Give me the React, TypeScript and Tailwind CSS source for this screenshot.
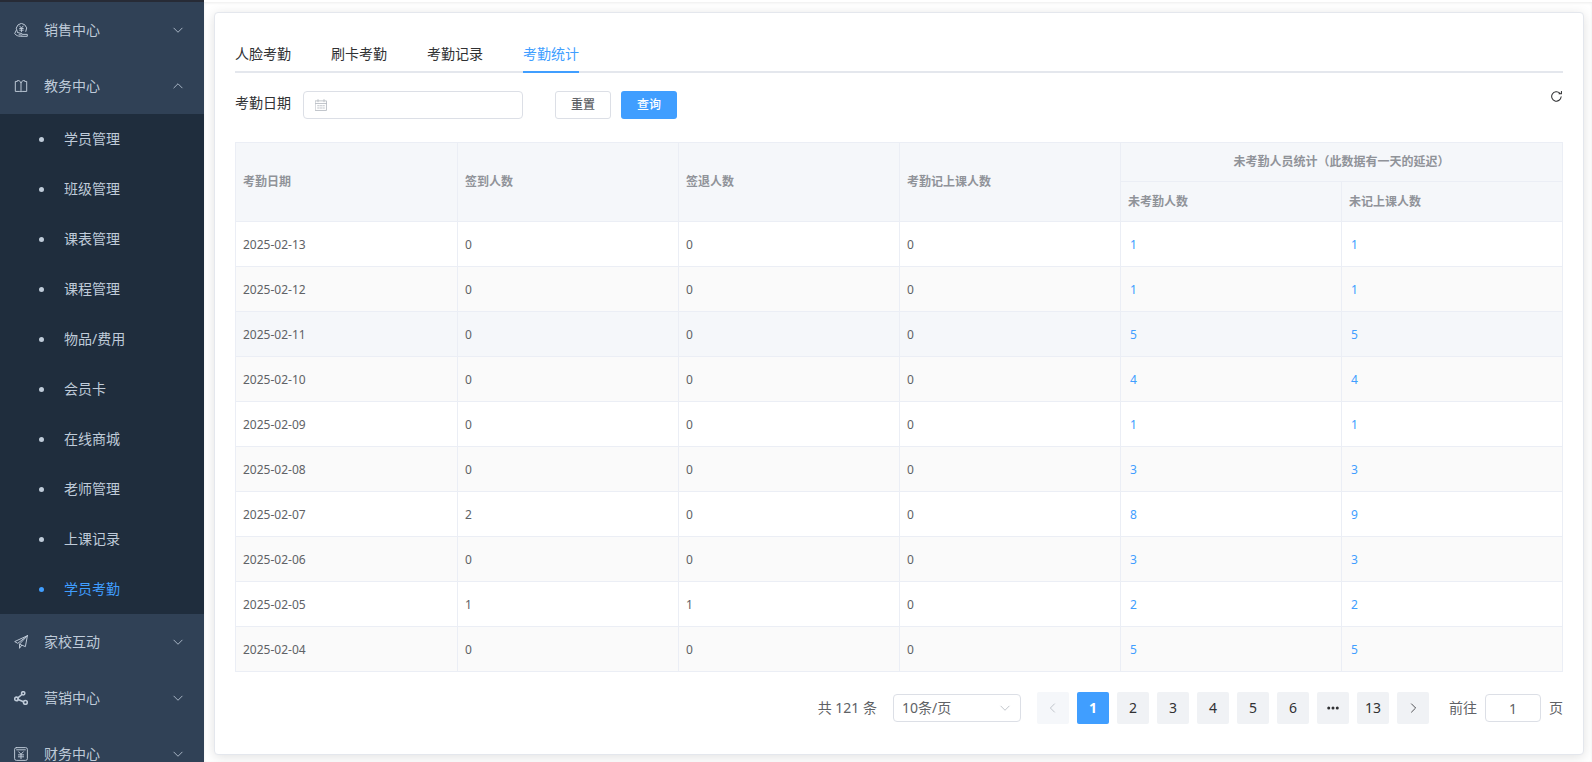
import type { ReactNode } from "react";

type Row = {
  date: string;
  signIn: number;
  signOut: number;
  recorded: number;
  absent: number;
  unrecorded: number;
};

const rows: Row[] = [
  { date: "2025-02-13", signIn: 0, signOut: 0, recorded: 0, absent: 1, unrecorded: 1 },
  { date: "2025-02-12", signIn: 0, signOut: 0, recorded: 0, absent: 1, unrecorded: 1 },
  { date: "2025-02-11", signIn: 0, signOut: 0, recorded: 0, absent: 5, unrecorded: 5 },
  { date: "2025-02-10", signIn: 0, signOut: 0, recorded: 0, absent: 4, unrecorded: 4 },
  { date: "2025-02-09", signIn: 0, signOut: 0, recorded: 0, absent: 1, unrecorded: 1 },
  { date: "2025-02-08", signIn: 0, signOut: 0, recorded: 0, absent: 3, unrecorded: 3 },
  { date: "2025-02-07", signIn: 2, signOut: 0, recorded: 0, absent: 8, unrecorded: 9 },
  { date: "2025-02-06", signIn: 0, signOut: 0, recorded: 0, absent: 3, unrecorded: 3 },
  { date: "2025-02-05", signIn: 1, signOut: 1, recorded: 0, absent: 2, unrecorded: 2 },
  { date: "2025-02-04", signIn: 0, signOut: 0, recorded: 0, absent: 5, unrecorded: 5 },
];

const subMenu: string[] = [
  "学员管理",
  "班级管理",
  "课表管理",
  "课程管理",
  "物品/费用",
  "会员卡",
  "在线商城",
  "老师管理",
  "上课记录",
  "学员考勤",
];

const tabs: string[] = ["人脸考勤", "刷卡考勤", "考勤记录", "考勤统计"];

function Icon({ children, className = "size-3.5" }: { children: ReactNode; className?: string }) {
  return (
    <svg
      viewBox="0 0 16 16"
      fill="none"
      stroke="currentColor"
      strokeWidth="1.1"
      strokeLinecap="round"
      strokeLinejoin="round"
      className={`shrink-0 ${className}`}
      aria-hidden="true"
    >
      {children}
    </svg>
  );
}

function SalesIcon() {
  return (
    <Icon>
      <path d="M3.600 9.800A5.900 5.900 0 1 1 13.600 9.600" />
      <path d="M6.500 3.500l2 2.300 2-2.300M8.500 6v4M6.500 6.300h4M6.500 8.200h4" />
      <path d="M2.500 8.500L.8 12.200c1.700 2 4 3 6.400 3h8v-2.200h-4.400M4 10.800l5 1.400c1.400.4 1.200 1.800-.2 1.600l-3-.4" />
    </Icon>
  );
}

function BookIcon() {
  return (
    <Icon>
      <path d="M8 4C7 2 4.800 1.400 3.800 1.800v1H1.500v11.400h5.200c.6 0 1 .2 1.300.6.3-.4.700-.6 1.300-.6h5.200V2.800h-2.300v-1C11.200 1.400 9 2 8 4z" />
      <path d="M8 4v10.500" />
    </Icon>
  );
}

function PlaneIcon() {
  return (
    <Icon>
      <path d="M15.300.8L.8 7.500l3.500 2L15.300.8zM15.300.8L6.300 10.500v4.700l2.400-3.400M15.300.8L13 13.300l-6.700-2.800" />
    </Icon>
  );
}

function ShareIcon() {
  return (
    <Icon>
      <g strokeWidth="1.8">
        <circle cx="10.500" cy="2.700" r="1.900" />
        <circle cx="2.800" cy="9" r="2" />
        <circle cx="13" cy="13" r="2.200" />
        <path d="M4.400 7.800L9 4M4.700 9.700l6.200 2.500" />
      </g>
    </Icon>
  );
}

function FinanceIcon() {
  return (
    <Icon>
      <rect x=".7" y=".7" width="14.600" height="14.600" rx="2" />
      <path d="M3 3.200h10M5.300 5.500L8 8.300l2.700-2.800M8 8.300v5M5 9h6M5 11.200h6" />
    </Icon>
  );
}

function Arrow({ d, className }: { d: string; className?: string }) {
  return (
    <Icon className={className}>
      <path d={d} />
    </Icon>
  );
}

const DOWN = "M2.500 5.500L8 11l5.500-5.500";
const UP = "M2.500 10.500L8 5l5.500 5.500";
const LEFT = "M10 2.500L4.500 8l5.500 5.500";
const RIGHT = "M6 2.500L11.500 8 6 13.500";

function MenuTitle({ icon, label, open = false }: { icon: ReactNode; label: string; open?: boolean }) {
  return (
    <button type="button" aria-expanded={open} className="flex h-14 w-full items-center pr-5 pl-3.5">
      {icon}
      <span className="ml-4 flex-1 text-left">{label}</span>
      <Arrow d={open ? UP : DOWN} className="size-3" />
    </button>
  );
}

function Sidebar() {
  return (
    <nav className="h-full w-[204px] shrink-0 overflow-hidden border-t-2 border-[#272b36] bg-[#304156] text-sm text-[#bfcbd9]">
      <MenuTitle icon={<SalesIcon />} label="销售中心" />
      <MenuTitle icon={<BookIcon />} label="教务中心" open />
      <ul className="bg-[#1f2d3d]">
        {subMenu.map((item) => (
          <li key={item}>
            <a
              href="#"
              className={`flex h-[50px] items-center gap-5 pl-[39px] ${item === "学员考勤" ? "text-[#409eff]" : ""}`}
            >
              <span className="size-[5px] rounded-full bg-current" />
              {item}
            </a>
          </li>
        ))}
      </ul>
      <MenuTitle icon={<PlaneIcon />} label="家校互动" />
      <MenuTitle icon={<ShareIcon />} label="营销中心" />
      <MenuTitle icon={<FinanceIcon />} label="财务中心" />
    </nav>
  );
}

function Tabs() {
  return (
    <div role="tablist" className="flex h-10 gap-10 text-sm text-[#303133] shadow-[inset_0_-2px_0_#e4e7ed]">
      {tabs.map((tab) => (
        <button
          key={tab}
          type="button"
          role="tab"
          aria-selected={tab === "考勤统计"}
          className="h-10 pt-0.5 aria-selected:text-[#409eff] aria-selected:shadow-[inset_0_-2px_0_#409eff]"
        >
          {tab}
        </button>
      ))}
    </div>
  );
}

function SearchBar() {
  return (
    <form className="mt-[18px] flex items-start text-xs">
      <label htmlFor="date" className="mr-3 text-sm leading-6 text-[#303133]">
        考勤日期
      </label>
      <div className="relative mr-8">
        <input id="date" className="h-7 w-[220px] rounded border border-[#dcdfe6] pr-2 pl-8 text-[#606266] outline-none" />
        <Icon className="absolute top-2 left-3 size-3 text-[#b4b8c0]">
          <path d="M.7 2.500h14.600v12.800H.7zM.7 6h14.600M4 .7v3M12 .7v3M3.500 9h2M7 9h2M10.500 9h2M3.500 12h2M7 12h2M10.500 12h2" />
        </Icon>
      </div>
      <button type="button" className="mr-2.5 h-7 w-14 rounded-[3px] border border-[#dcdfe6] font-medium text-[#606266]">
        重置
      </button>
      <button type="submit" className="h-7 w-14 rounded-[3px] bg-[#409eff] font-medium text-white">
        查询
      </button>
      <button type="button" aria-label="刷新" className="ml-auto text-[#303133]">
        <Icon className="size-3">
          <path d="M13.500 7.600A6.300 6.300 0 1 1 11.700 2.800M13.900.6v3h-3.200" strokeWidth="1.400" />
        </Icon>
      </button>
    </form>
  );
}

function StatTable() {
  const th = "border-r border-b border-[#ebeef5] px-[7px] text-left font-bold";
  const td = "border-r border-b border-[#ebeef5] px-[7px] pt-0.5";
  return (
    <table className="mt-[23px] w-full table-fixed border-separate border-spacing-0 border-t border-l border-[#ebeef5] text-xs text-[#606266]">
      <thead className="bg-[#f5f7fa] text-[#909399]">
        <tr className="h-[39px]">
          <th rowSpan={2} className={`w-[222px] ${th}`}>考勤日期</th>
          <th rowSpan={2} className={th}>签到人数</th>
          <th rowSpan={2} className={th}>签退人数</th>
          <th rowSpan={2} className={th}>考勤记上课人数</th>
          <th colSpan={2} className="border-r border-b border-[#ebeef5] text-center font-bold">
            未考勤人员统计（此数据有一天的延迟）
          </th>
        </tr>
        <tr className="h-10">
          <th className={th}>未考勤人数</th>
          <th className={th}>未记上课人数</th>
        </tr>
      </thead>
      <tbody>
        {rows.map((row, i) => (
          <tr key={row.date} className={`h-[45px] ${i === 2 ? "bg-[#f5f7fa]" : i % 2 ? "bg-[#fafafa]" : ""}`}>
            <td className={td}>{row.date}</td>
            <td className={td}>{row.signIn}</td>
            <td className={td}>{row.signOut}</td>
            <td className={td}>{row.recorded}</td>
            <td className={td}>
              <a href="#" className="px-0.5 text-[#409eff]">{row.absent}</a>
            </td>
            <td className={td}>
              <a href="#" className="px-0.5 text-[#409eff]">{row.unrecorded}</a>
            </td>
          </tr>
        ))}
      </tbody>
    </table>
  );
}

function Pagination() {
  const pages = ["1", "2", "3", "4", "5", "6", "more", "13"];
  return (
    <div className="mt-5 flex items-center justify-end text-sm text-[#606266]">
      <span>共 121 条</span>
      <div className="relative mr-4 ml-4">
        <select
          aria-label="每页条数"
          className="h-7 w-32 appearance-none rounded border border-[#dcdfe6] bg-white pl-2 outline-none"
        >
          <option>10条/页</option>
        </select>
        <Arrow d={DOWN} className="pointer-events-none absolute top-2 right-2.5 size-3 text-[#b4b8c0]" />
      </div>
      <div className="flex gap-2 text-[#303133]">
        <button type="button" aria-label="上一页" disabled className="flex size-8 items-center justify-center rounded-xs bg-[#f5f7fa] text-[#b4b8c0]">
          <Arrow d={LEFT} className="size-3" />
        </button>
        {pages.map((page) => (
          <button
            key={page}
            type="button"
            aria-label={page === "more" ? "更多" : page}
            className={`flex size-8 items-center justify-center rounded-xs ${page === "1" ? "bg-[#409eff] font-bold text-white" : "bg-[#f0f2f5]"}`}
          >
            {page === "more" ? (
              <Icon className="size-3">
                <path d="M2.300 8h.01M8 8h.01M13.700 8h.01" strokeWidth="4" />
              </Icon>
            ) : (
              page
            )}
          </button>
        ))}
        <button type="button" aria-label="下一页" className="flex size-8 items-center justify-center rounded-xs bg-[#f0f2f5]">
          <Arrow d={RIGHT} className="size-3" />
        </button>
      </div>
      <label htmlFor="jump" className="mr-2 ml-5">前往</label>
      <input
        id="jump"
        defaultValue="1"
        className="mr-2 h-7 w-14 rounded border border-[#dcdfe6] text-center outline-none"
      />
      <span>页</span>
    </div>
  );
}

export default function App() {
  return (
    <div className="flex h-screen overflow-hidden bg-white font-['Noto_Sans','Noto_Sans_CJK_SC',sans-serif]">
      <Sidebar />
      <main className="min-w-0 flex-1 border-t-2 border-white pt-2.5 pr-2 pb-2 pl-2.5 shadow-[inset_0_1px_3px_rgba(0,0,0,0.08)]">
        <div className="rounded border border-[#e4e7ed] bg-white px-5 pt-5 pb-[30px] shadow-[0_2px_12px_rgba(0,0,0,0.12)]">
          <Tabs />
          <SearchBar />
          <StatTable />
          <Pagination />
        </div>
      </main>
    </div>
  );
}
